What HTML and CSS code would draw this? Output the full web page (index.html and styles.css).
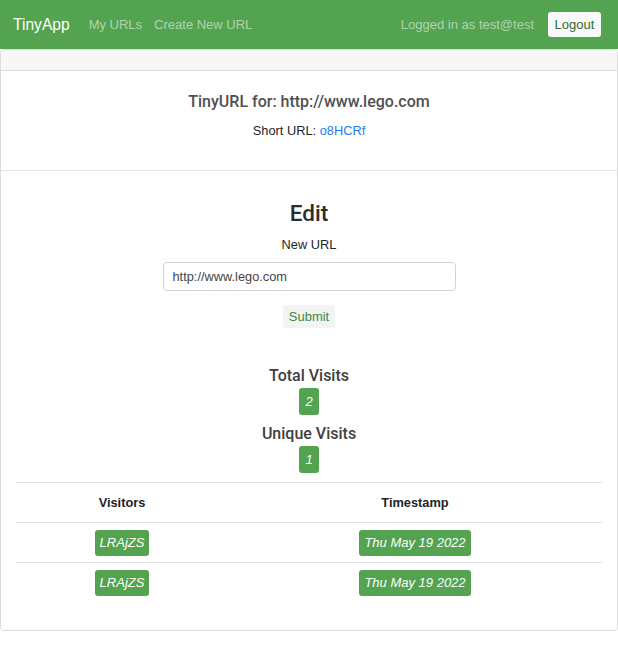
FILE: index.html
```html
<!DOCTYPE html>
<html lang="en">
<head>
<meta charset="utf-8">
<title>TinyApp</title>
<link rel="stylesheet" href="styles.css">
</head>
<body>
<nav class="navbar">
  <a class="brand" href="#">TinyApp</a>
  <a class="nav-link" href="#">My URLs</a>
  <a class="nav-link" href="#">Create New URL</a>
  <span class="spacer"></span>
  <span class="user">Logged in as test@test</span>
  <button class="btn-logout">Logout</button>
</nav>
<div class="card">
  <div class="card-header"></div>
  <div class="card-body info">
    <h5 class="title">TinyURL for: http://www.lego.com</h5>
    <p class="short">Short URL: <a href="#">o8HCRf</a></p>
  </div>
  <div class="card-body edit">
    <h3 class="edit-title">Edit</h3>
    <form class="form">
      <label class="label">New URL</label>
      <input class="input" type="text" value="http://www.lego.com">
      <button class="btn-submit" type="button">Submit</button>
    </form>
    <h4 class="stat first">Total Visits</h4>
    <span class="badge count">2</span>
    <h4 class="stat">Unique Visits</h4>
    <span class="badge count">1</span>
    <table class="table">
      <thead>
        <tr><th class="col-a">Visitors</th><th class="col-b">Timestamp</th></tr>
      </thead>
      <tbody>
        <tr><td><span class="badge">LRAjZS</span></td><td><span class="badge">Thu May 19 2022</span></td></tr>
        <tr><td><span class="badge">LRAjZS</span></td><td><span class="badge">Thu May 19 2022</span></td></tr>
      </tbody>
    </table>
  </div>
</div>
</body>
</html>
```

FILE: styles.css
```css
* { box-sizing: border-box; }
body {
  margin: 0;
  font-family: "Liberation Sans", Arial, sans-serif;
  color: #212529;
  background: #fff;
}
.navbar {
  height: 49px;
  background: #53a350;
  display: flex;
  align-items: center;
  padding: 0 17px 0 13px;
}
.brand {
  color: #fff;
  text-decoration: none;
  font-size: 15.6px;
  margin-right: 19px;
}
.nav-link {
  color: rgba(255,255,255,0.55);
  text-decoration: none;
  font-size: 13px;
  margin-right: 12px;
}
.spacer { flex: 1; }
.user {
  color: rgba(255,255,255,0.55);
  font-size: 13px;
  margin-right: 14px;
}
.btn-logout {
  font-family: inherit;
  font-size: 13px;
  background: #f8f9fa;
  color: #346b32;
  border: none;
  border-radius: 3px;
  height: 25px;
  width: 53px;
  padding: 0;
}
.card {
  width: 618px;
  border: 1px solid #dcdcdc;
  border-radius: 4px;
  overflow: hidden;
}
.card-header {
  height: 21px;
  background: #f7f7f7;
  border-bottom: 1px solid #dcdcdc;
}
.card-body { text-align: center; }
.info {
  padding: 21px 15px 30px;
  border-bottom: 1px solid #e3e3e3;
}
.title {
  margin: 0;
  font-family: Roboto, "Liberation Sans", sans-serif;
  font-size: 16px;
  line-height: 20px;
  font-weight: 500;
  color: #505050;
}
.short {
  margin: 10px 0 0;
  font-size: 12.8px;
  line-height: 18px;
}
.short a { color: #1a7cf0; text-decoration: none; }
.edit { padding: 29px 15px 27px; }
.edit-title {
  margin: 0;
  font-family: Roboto, "Liberation Sans", sans-serif;
  font-size: 22.5px;
  line-height: 26px;
  font-weight: 500;
  color: #2a2d30;
}
.form {
  display: flex;
  flex-direction: column;
  align-items: center;
}
.label {
  margin-top: 10px;
  font-size: 12.8px;
  line-height: 18px;
}
.input {
  margin-top: 8px;
  width: 293px;
  height: 29px;
  border: 1px solid #cfd3d7;
  border-radius: 4px;
  padding: 0 9px;
  font-family: inherit;
  font-size: 12.8px;
  color: #444;
}
.btn-submit {
  margin-top: 14px;
  width: 52px;
  height: 23px;
  padding: 0;
  border: none;
  border-radius: 3px;
  background: #f3f3f3;
  color: #3e8a3b;
  font-family: inherit;
  font-size: 13px;
}
.stat {
  margin: 8px 0 1px;
  font-family: Roboto, "Liberation Sans", sans-serif;
  font-size: 16px;
  line-height: 22px;
  font-weight: 500;
  color: #404040;
}
.stat.first { margin-top: 37px; }
.badge {
  display: inline-block;
  background: #53a350;
  color: #fff;
  font-style: italic;
  font-size: 13px;
  line-height: 26px;
  padding: 0 5px;
  border-radius: 3px;
}
.badge.count {
  line-height: 27px;
  padding: 0 6.5px;
}
.table {
  width: 100%;
  margin-top: 9px;
  border-collapse: collapse;
}
.table th, .table td {
  border-top: 1px solid #dee2e6;
  height: 40px;
  padding: 0;
  text-align: center;
  vertical-align: middle;
}
.table th {
  font-size: 12.8px;
  font-weight: bold;
  color: #212529;
}
.col-a { width: 212px; }
```
